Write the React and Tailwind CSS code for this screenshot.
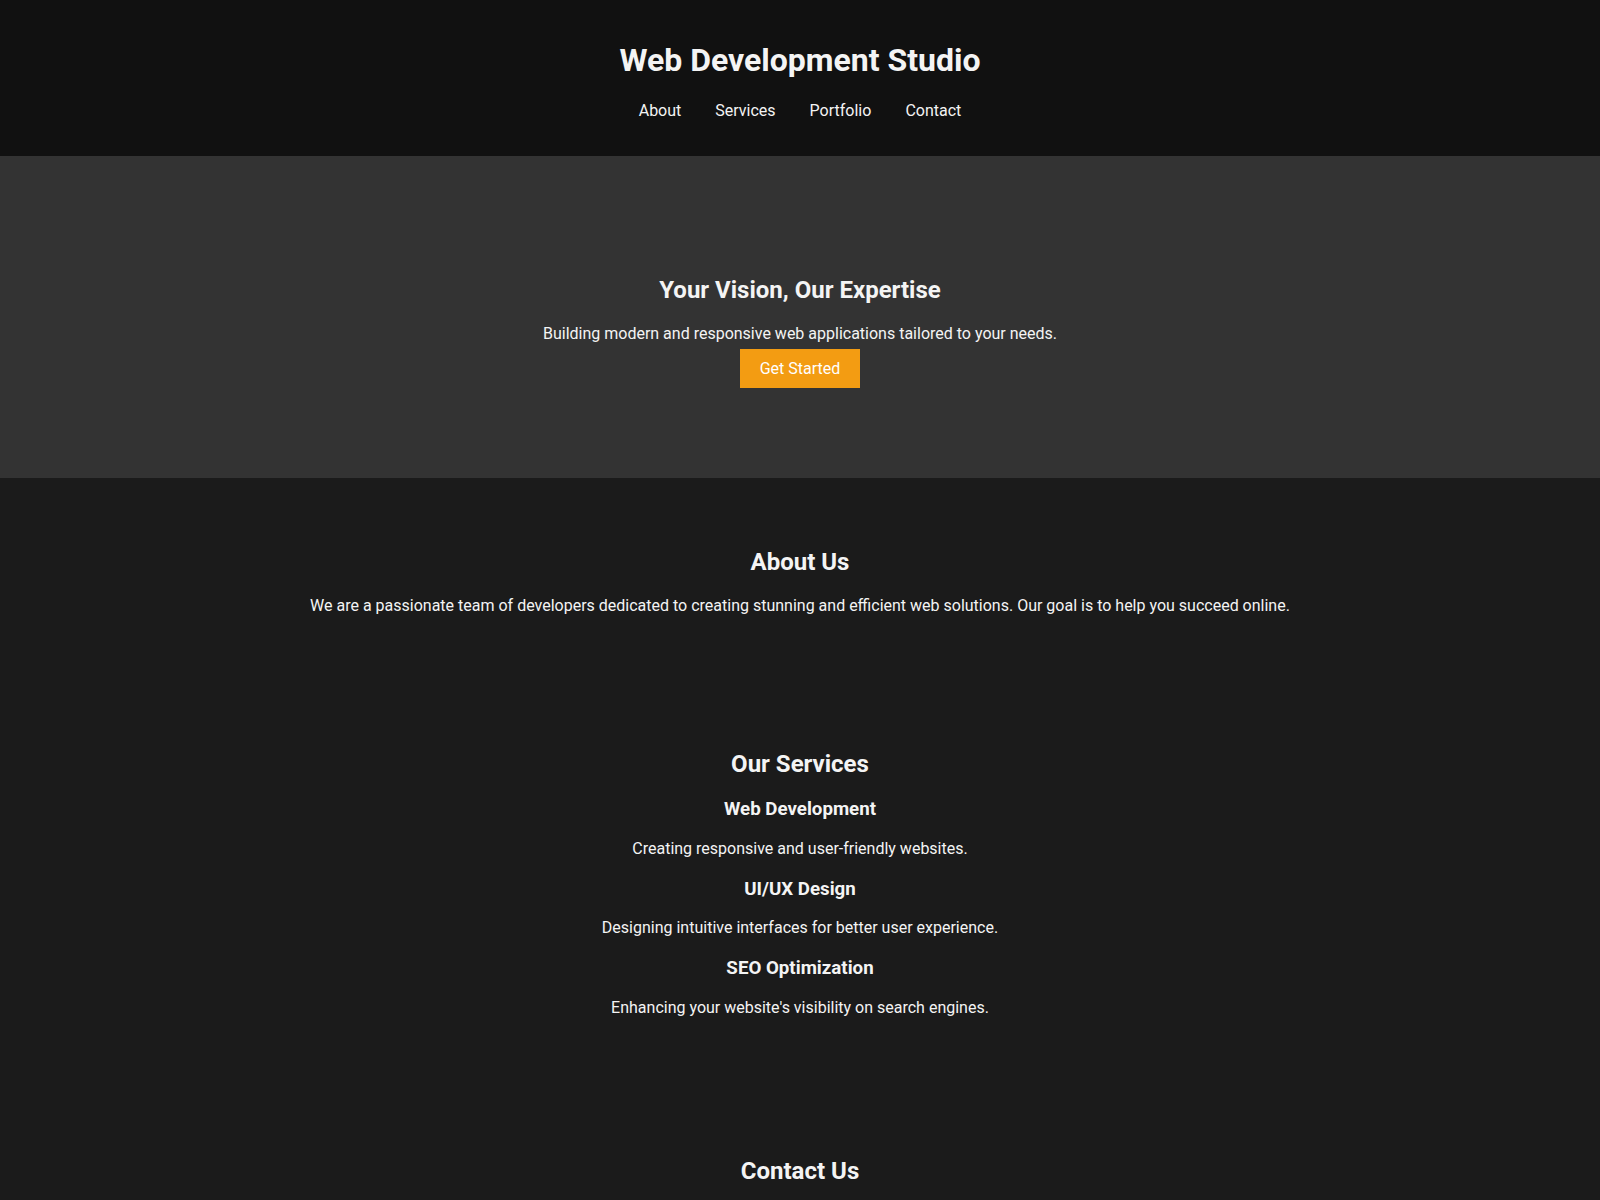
export default function App() {
  const services = [
    { t: "Web Development", d: "Creating responsive and user-friendly websites." },
    { t: "UI/UX Design", d: "Designing intuitive interfaces for better user experience." },
    { t: "SEO Optimization", d: "Enhancing your website's visibility on search engines." },
  ];
  return (
    <div className="min-h-screen bg-[#1b1b1b] text-[#f4f4f4] text-center leading-[normal] font-['Roboto',sans-serif]">
      <header className="bg-[#111111] py-5 flow-root">
        <h1 className="text-[32px] font-bold my-[21.44px]">Web Development Studio</h1>
        <nav>
          <ul className="flex justify-center gap-[34px] my-4 text-[16px]">
            <li><a href="#about" className="text-[#f4f4f4]">About</a></li>
            <li><a href="#services" className="text-[#f4f4f4]">Services</a></li>
            <li><a href="#portfolio" className="text-[#f4f4f4]">Portfolio</a></li>
            <li><a href="#contact" className="text-[#f4f4f4]">Contact</a></li>
          </ul>
        </nav>
      </header>

      <section className="bg-[#333333] pt-[100px] pb-[90px] flow-root">
        <h2 className="text-[24px] font-bold mt-[20px]">Your Vision, Our Expertise</h2>
        <p className="text-[16px] mt-[20px] mb-[6px]">Building modern and responsive web applications tailored to your needs.</p>
        <div>
          <a href="#contact" className="inline-block bg-[#f39c12] text-white text-[16px] px-5 py-[10px]">Get Started</a>
        </div>
      </section>

      <section id="about" className="pt-[50px] pb-[49px] flow-root">
        <h2 className="text-[24px] font-bold mt-[20px] mb-[20px]">About Us</h2>
        <p className="text-[16px] mb-4">We are a passionate team of developers dedicated to creating stunning and efficient web solutions. Our goal is to help you succeed online.</p>
      </section>

      <section id="services" className="pt-[50px] pb-[50px] flow-root">
        <h2 className="text-[24px] font-bold mt-[20px]">Our Services</h2>
        {services.map((s) => (
          <div key={s.t} className="my-[20px]">
            <h3 className="text-[18.72px] font-bold mb-[18.72px]">{s.t}</h3>
            <p className="text-[16px]">{s.d}</p>
          </div>
        ))}
      </section>

      <section id="contact" className="pt-[50px] pb-[50px] flow-root">
        <h2 className="text-[24px] font-bold mt-[20px] mb-[20px]">Contact Us</h2>
      </section>
    </div>
  );
}
